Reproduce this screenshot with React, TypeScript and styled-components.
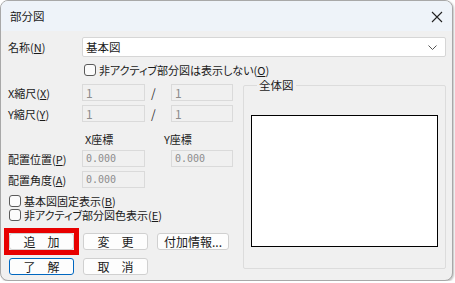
import React from "react";
import styled, { createGlobalStyle } from "styled-components";

const Global = createGlobalStyle`
  html, body { margin: 0; padding: 0; background: #ffffff; }
  body {
    font-family: "Noto Sans CJK JP", "Noto Sans", sans-serif;
    font-size: 11px;
    color: #1a1a1a;
    font-feature-settings: "palt";
    text-autospace: no-autospace;
    text-spacing-trim: space-all;
  }
`;

const Window = styled.div`
  box-sizing: border-box;
  width: 453px;
  height: 281px;
  border: 1px solid #a8a8a8;
  border-radius: 8px;
  background: #f0f0f0;
  overflow: hidden;
  display: flex;
  flex-direction: column;
  box-shadow: 1px 1px 2px rgba(0,0,0,0.25);
`;

const TitleBar = styled.div`
  height: 30px;
  flex: none;
  background: #eef3f9;
  display: flex;
  align-items: center;
  justify-content: space-between;
  padding: 0 8px 0 9px;
  font-size: 11.5px;
  line-height: 14px;
`;

const CloseBtn = styled.div`
  width: 14px;
  height: 14px;
  display: flex;
  align-items: center;
  justify-content: center;
  margin-top: 1px;
`;

const Body = styled.div`
  padding: 6px 0 0 7px;
  display: flex;
  flex-direction: column;
`;

const Label = styled.span<{ $w?: number }>`
  width: ${(p) => p.$w ?? 74}px;
  flex: none;
  line-height: 14px;
  white-space: nowrap;
`;

const U = styled.span`
  text-decoration: underline;
  text-underline-offset: 1px;
`;

const Row = styled.div<{ $h?: number; $mt?: number }>`
  display: flex;
  align-items: center;
  height: ${(p) => p.$h ?? 17}px;
  margin-top: ${(p) => p.$mt ?? 0}px;
`;

const Combo = styled.div`
  box-sizing: border-box;
  width: 364px;
  height: 20px;
  background: #ffffff;
  border: 1px solid #d6d6d6;
  border-radius: 2px;
  display: flex;
  align-items: center;
  justify-content: space-between;
  padding: 0 8px 0 3px;
  font-size: 11.5px;
`;

const CheckRow = styled.label<{ $indent?: number }>`
  display: flex;
  align-items: center;
  gap: 3px;
  height: 14px;
  padding-left: ${(p) => p.$indent ?? 0}px;
  line-height: 14px;
  white-space: nowrap;
`;

const CheckText = styled.span`
  line-height: 13px;
`;

const Box = styled.span`
  box-sizing: border-box;
  width: 12px;
  height: 12px;
  border: 1px solid #5a5a5a;
  border-radius: 3px;
  background: #fbfbfb;
  flex: none;
`;

const Main = styled.div`
  display: grid;
  grid-template-columns: 235px 203px;
  margin-top: 7px;
`;

const Left = styled.div`
  display: flex;
  flex-direction: column;
`;

const Field = styled.div<{ $w?: number; $mono?: boolean }>`
  box-sizing: border-box;
  width: ${(p) => p.$w ?? 63}px;
  height: 17px;
  border: 1px solid #dadada;
  background: #f0f0f0;
  color: #8c8c8c;
  display: flex;
  align-items: center;
  padding-left: 3px;
  font-family: ${(p) => (p.$mono ? `"DejaVu Sans Mono", "Liberation Mono", monospace` : `"Noto Sans CJK JP", sans-serif`)};
  font-size: ${(p) => (p.$mono ? 10 : 12)}px;
  flex: none;
`;

const Slash = styled.span`
  width: 26px;
  flex: none;
  padding-left: 6px;
  box-sizing: border-box;
  font-size: 12px;
  color: #333;
`;

const Header = styled.div`
  display: flex;
  height: 14px;
  margin-top: 10px;
  padding-left: 77px;
  line-height: 14px;
`;

const HeaderCell = styled.span`
  width: 88px;
`;

const Checks = styled.div`
  display: flex;
  flex-direction: column;
  margin-top: 6px;
  padding-left: 1px;
`;

const ButtonRow = styled.div<{ $mt: number }>`
  display: flex;
  gap: 9px;
  margin-top: ${(p) => p.$mt}px;
  padding-left: 1px;
`;

const Marker = styled.span`
  display: flex;
  outline: 5px solid #e80000;
  outline-offset: 0;
`;

const Button = styled.div<{ $w?: number; $default?: boolean }>`
  box-sizing: border-box;
  width: ${(p) => p.$w ?? 65}px;
  height: 17px;
  background: #fdfdfd;
  border: 1px solid ${(p) => (p.$default ? "#0067c0" : "#d0d0d0")};
  border-radius: 3px;
  display: flex;
  align-items: center;
  justify-content: center;
  font-size: 12px;
  line-height: 14px;
  white-space: pre;
`;

const Group = styled.fieldset`
  box-sizing: border-box;
  margin: 0;
  margin-top: -6px;
  height: 191px;
  border: 1px solid #dcdcdc;
  border-radius: 2px;
  padding: 0 0 0 7px;
  display: flex;
  flex-direction: column;
`;

const Legend = styled.legend`
  padding: 0 2px;
  margin-left: 6px;
  font-size: 11.5px;
  line-height: 14px;
`;

const Preview = styled.div`
  box-sizing: border-box;
  width: 187px;
  height: 132px;
  margin-top: 23px;
  background: #ffffff;
  border: 1px solid #000000;
`;

export default function App() {
  return (
    <>
      <Global />
      <Window>
        <TitleBar>
          <span>部分図</span>
          <CloseBtn>
            <svg width="12" height="12" viewBox="0 0 12 12">
              <path d="M1 1L11 11M11 1L1 11" stroke="#222" strokeWidth="1.1" fill="none" />
            </svg>
          </CloseBtn>
        </TitleBar>
        <Body>
          <Row $h={20}>
            <Label>名称(<U>N</U>)</Label>
            <Combo>
              <span>基本図</span>
              <svg width="9" height="5" viewBox="0 0 9 5">
                <path d="M0.5 0.5L4.5 4.5L8.5 0.5" stroke="#555" strokeWidth="1" fill="none" />
              </svg>
            </Combo>
          </Row>
          <Row $h={14} $mt={6}>
            <CheckRow $indent={76}>
              <Box />
              <CheckText>非アクティブ部分図は表示しない(<U>O</U>)</CheckText>
            </CheckRow>
          </Row>
          <Main>
            <Left>
              <Row>
                <Label>X縮尺(<U>X</U>)</Label>
                <Field>1</Field>
                <Slash>/</Slash>
                <Field $w={62}>1</Field>
              </Row>
              <Row $mt={4}>
                <Label>Y縮尺(<U>Y</U>)</Label>
                <Field>1</Field>
                <Slash>/</Slash>
                <Field $w={62}>1</Field>
              </Row>
              <Header>
                <HeaderCell>X座標</HeaderCell>
                <HeaderCell>Y座標</HeaderCell>
              </Header>
              <Row $mt={4}>
                <Label>配置位置(<U>P</U>)</Label>
                <Field $mono>0.000</Field>
                <Slash />
                <Field $w={62} $mono>0.000</Field>
              </Row>
              <Row $mt={4}>
                <Label>配置角度(<U>A</U>)</Label>
                <Field $mono>0.000</Field>
              </Row>
              <Checks>
                <CheckRow>
                  <Box />
                  <CheckText>基本図固定表示(<U>B</U>)</CheckText>
                </CheckRow>
                <CheckRow>
                  <Box />
                  <CheckText>非アクティブ部分図色表示(<U>E</U>)</CheckText>
                </CheckRow>
              </Checks>
              <ButtonRow $mt={11}>
                <Marker>
                  <Button>{"追　加"}</Button>
                </Marker>
                <Button>{"変　更"}</Button>
                <Button $w={72}>付加情報...</Button>
              </ButtonRow>
              <ButtonRow $mt={8}>
                <Button $default>{"了　解"}</Button>
                <Button>{"取　消"}</Button>
              </ButtonRow>
            </Left>
            <Group>
              <Legend>全体図</Legend>
              <Preview />
            </Group>
          </Main>
        </Body>
      </Window>
    </>
  );
}
